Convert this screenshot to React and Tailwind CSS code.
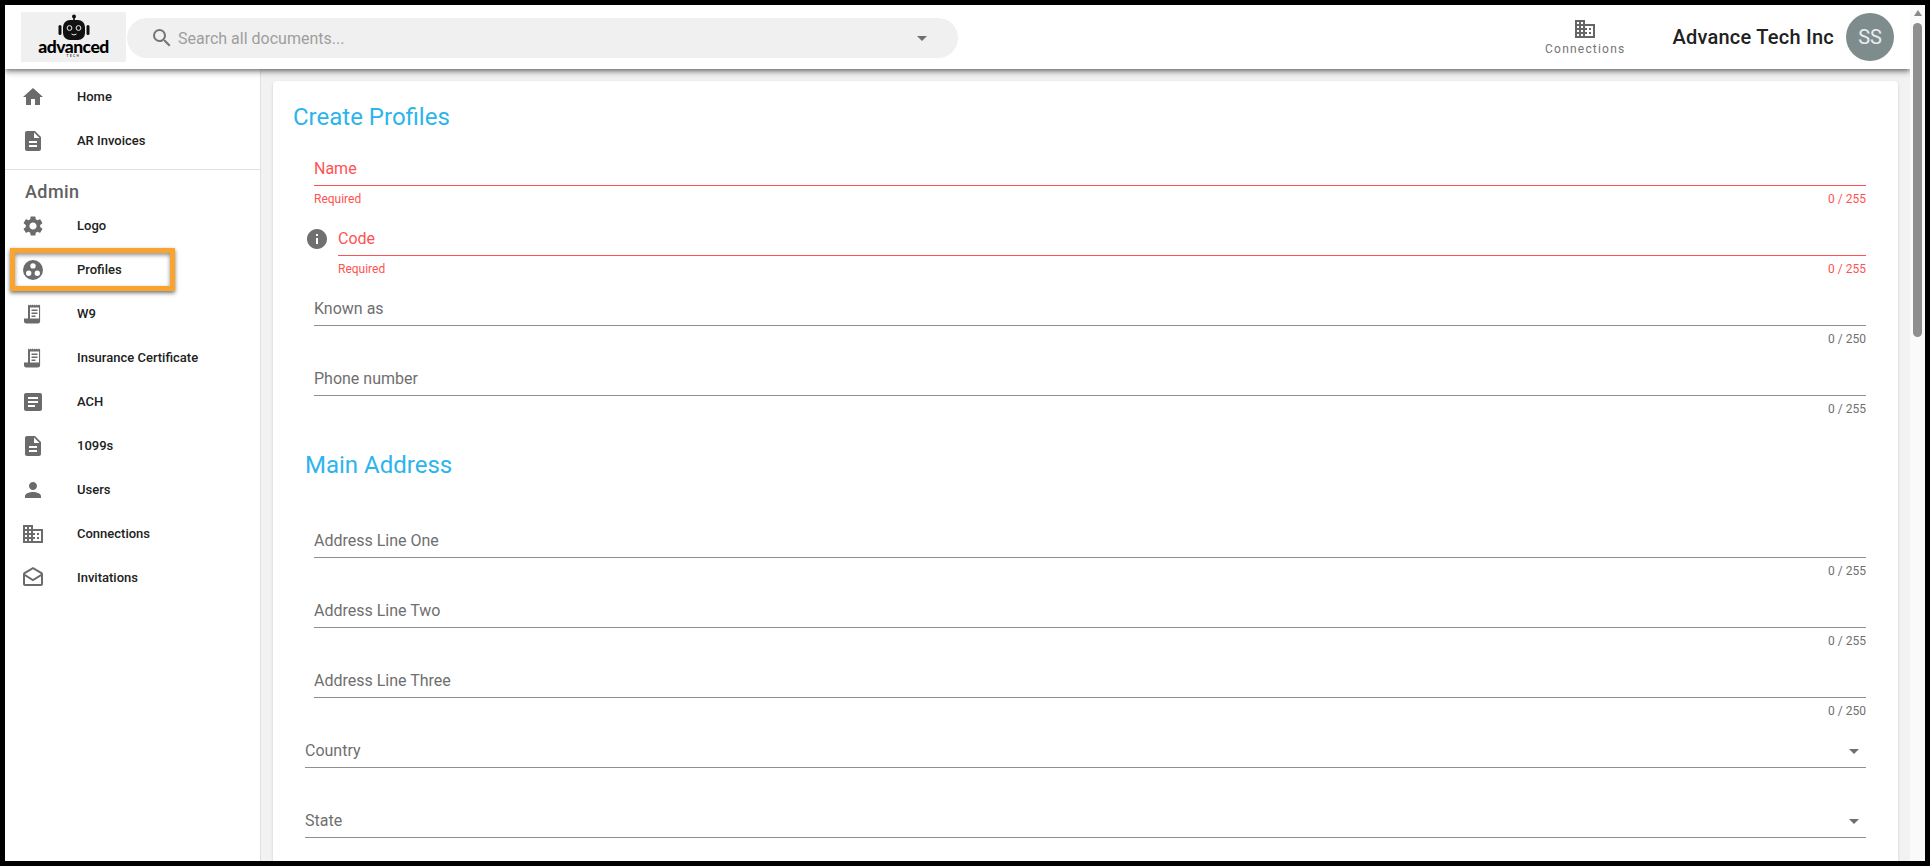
import { MdHome, MdDescription, MdSettings, MdArticle, MdPerson, MdDomain, MdOutlineDrafts, MdInfo, MdSearch, MdArrowDropDown } from 'react-icons/md';

// three holes punched out of a disc
function ProfilesIcon({ className }) {
  return (
    <svg viewBox="0 0 24 24" className={className} fill="currentColor">
      <path
        fillRule="evenodd"
        d="M12 2a10 10 0 1 0 0 20 10 10 0 0 0 0-20Zm0 3.2a2.7 2.7 0 1 1 0 5.4 2.7 2.7 0 0 1 0-5.4Zm-4.3 7.4a2.7 2.7 0 1 1 0 5.4 2.7 2.7 0 0 1 0-5.4Zm8.6 0a2.7 2.7 0 1 1 0 5.4 2.7 2.7 0 0 1 0-5.4Z"
      />
    </svg>
  );
}

// page with a zigzag top and a rolled foot
function ScriptIcon({ className }) {
  return (
    <svg viewBox="0 0 24 24" className={className} fill="currentColor">
      <path
        fillRule="evenodd"
        d="M7 2.5l1.1 1 1.1-1 1.1 1 1.1-1 1.1 1 1.1-1 1.1 1 1.1-1 1.1 1 1.1-1 1.1 1 V19a2.5 2.5 0 0 1-2.5 2.5H5.5A2.5 2.5 0 0 1 3 19v-2.5h4ZM9 5.5v11h9v-11ZM10.5 7.5h6V9h-6ZM10.5 10.5h6V12h-6ZM10.5 13.5h4V15h-4Z"
      />
    </svg>
  );
}

function Logo() {
  return (
    <div className="w-[105px] h-[50px] bg-[#f0f0f0] flex flex-col items-center shrink-0 overflow-hidden">
      <svg viewBox="0 0 36 26" className="w-[36px] h-[26px] mt-[2px] shrink-0">
        <circle cx="18" cy="2.5" r="2" fill="#111" />
        <rect x="17.2" y="3" width="1.6" height="4" fill="#111" />
        <rect x="7" y="6" width="22" height="20" rx="7" fill="#111" />
        <rect x="2.5" y="11" width="3" height="10" rx="1.5" fill="#111" />
        <rect x="30.5" y="11" width="3" height="10" rx="1.5" fill="#111" />
        <circle cx="13.5" cy="14" r="2.4" fill="none" stroke="#eee" strokeWidth="1" />
        <circle cx="22.5" cy="14" r="2.4" fill="none" stroke="#eee" strokeWidth="1" />
        <path d="M15.5 20q2.5 2 5 0" fill="none" stroke="#eee" strokeWidth="1" />
      </svg>
      <div className="font-['Lato',sans-serif] font-black text-[17.5px] leading-[13px] tracking-[-0.5px] text-black">advanced</div>
      <div className="font-['Lato',sans-serif] font-bold text-[3px] leading-[6px] tracking-[1.5px] text-[#333]">TECH</div>
    </div>
  );
}

function NavItem({ icon: Icon, label, highlight }) {
  return (
    <div className="relative h-[44px] flex items-center pl-[16px]">
      <Icon className="w-[24px] h-[24px] text-[#6b6b6b] shrink-0" />
      <span className="ml-[32px] text-[13px] font-medium text-[#212121]">{label}</span>
      {highlight && (
        <div className="absolute left-[5px] top-[0px] w-[165px] h-[43px] border-[5px] border-[#f9a42e] shadow-[0_2px_4px_rgba(0,0,0,0.55),inset_0_2px_4px_rgba(0,0,0,0.45)]" />
      )}
    </div>
  );
}

function Field({ label, count, max = 255, error, info, select }) {
  const color = error ? 'text-[#ff5252]' : 'text-[#6f6f6f]';
  const line = error ? 'border-[#ff5252]' : 'border-[#8f8f8f]';
  return (
    <div className={`h-[70px] flex ${select ? 'pl-[32px]' : 'pl-[41px]'}`}>
      {info && <MdInfo className="w-[24px] h-[24px] text-[#707070] shrink-0 mt-[5px] -ml-[9px] mr-[9px]" />}
      <div className="flex-1 min-w-0">
        <div className={`h-[34px] border-b ${line} flex items-center justify-between`}>
          <span className={`text-[16px] ${color}`}>{label}</span>
          {select && <MdArrowDropDown className="w-[24px] h-[24px] text-[#6f6f6f]" />}
        </div>
        {!select && (
          <div className={`flex justify-between text-[12px] leading-[14px] mt-[6px] ${color}`}>
            <span>{error ? 'Required' : ''}</span>
            <span>{count ?? `0 / ${max}`}</span>
          </div>
        )}
      </div>
    </div>
  );
}

export default function App() {
  return (
    <div className="w-[1930px] h-[866px] overflow-hidden border-[5px] border-black bg-white flex font-['Roboto',sans-serif]">
      <div className="w-[1905px] h-[856px] flex flex-col overflow-hidden">
        {/* top bar */}
        <header className="relative z-10 h-[64px] shrink-0 bg-white shadow-[0_2px_4px_-1px_rgba(0,0,0,0.4),0_4px_5px_rgba(0,0,0,0.2),0_1px_10px_rgba(0,0,0,0.12)] flex items-center pl-[16px] pr-[16px]">
          <Logo />
          <div className="w-[831px] h-[40px] ml-[1px] mt-[2px] rounded-full bg-[#f0f0f0] flex items-center pl-[23px] pr-[24px]">
            <MdSearch className="w-[24px] h-[24px] text-[#757575] shrink-0" />
            <span className="ml-[4px] mt-[1px] text-[16px] text-[#9e9e9e] flex-1">Search all documents...</span>
            <MdArrowDropDown className="w-[24px] h-[24px] text-[#6f6f6f]" />
          </div>
          <div className="flex-1" />
          <div className="flex flex-col items-center mr-[47px]">
            <MdDomain className="w-[24px] h-[24px] text-[#666] mt-[-1px]" />
            <span className="text-[12px] leading-[14px] mt-[1px] tracking-[1.2px] text-[#757575]">Connections</span>
          </div>
          <span className="text-[20px] font-medium tracking-[0.25px] text-[#212121] mt-[-1px]">Advance Tech Inc</span>
          <div className="w-[48px] h-[48px] ml-[12px] mt-[-1px] rounded-full bg-[#7f8c8d] flex items-center justify-center text-[20px] text-[#e8eded]">SS</div>
        </header>

        <div className="flex-1 flex min-h-0">
          {/* sidebar */}
          <aside className="w-[256px] shrink-0 bg-white border-r border-[#e0e0e0] pt-[6px]">
            <NavItem icon={MdHome} label="Home" />
            <NavItem icon={MdDescription} label="AR Invoices" />
            <div className="border-t border-[#e0e0e0] mt-[6px]" />
            <div className="h-[32px] flex items-center pl-[20px] mt-[5px] text-[18px] font-medium tracking-[0.4px] text-[#616161]">Admin</div>
            <div className="mt-[-3px]">
              <NavItem icon={MdSettings} label="Logo" />
              <NavItem icon={ProfilesIcon} label="Profiles" highlight />
              <NavItem icon={ScriptIcon} label="W9" />
              <NavItem icon={ScriptIcon} label="Insurance Certificate" />
              <NavItem icon={MdArticle} label="ACH" />
              <NavItem icon={MdDescription} label="1099s" />
              <NavItem icon={MdPerson} label="Users" />
              <NavItem icon={MdDomain} label="Connections" />
              <NavItem icon={MdOutlineDrafts} label="Invitations" />
            </div>
          </aside>

          {/* main */}
          <main className="flex-1 min-w-0 bg-[#f2f2f2] pl-[12px] pr-[12px] pt-[12px]">
            <div className="bg-white rounded-[4px] shadow-[0_1px_3px_rgba(0,0,0,0.15)] h-[900px] pr-[32px]">
              <h1 className="h-[71px] pl-[20px] pt-[21px] text-[24px] leading-[30px] text-[#2db4ec]">Create Profiles</h1>
              <Field label="Name" error />
              <Field label="Code" error info />
              <Field label="Known as" max={250} />
              <Field label="Phone number" />
              <h2 className="h-[92px] pl-[32px] pt-[17px] text-[24px] leading-[32px] text-[#2db4ec]">Main Address</h2>
              <Field label="Address Line One" />
              <Field label="Address Line Two" />
              <Field label="Address Line Three" max={250} />
              <Field label="Country" select />
              <Field label="State" select />
            </div>
          </main>
        </div>
      </div>

      {/* scrollbar */}
      <div className="w-[15px] h-[856px] shrink-0 bg-[#fafafa] flex flex-col items-center">
        <div className="mt-[5px] w-0 h-0 border-l-[4.5px] border-r-[4.5px] border-b-[6px] border-l-transparent border-r-transparent border-b-[#8a8a8a]" />
        <div className="mt-[7px] w-[9px] h-[314px] rounded-full bg-[#8f8f8f]" />
      </div>
    </div>
  );
}
